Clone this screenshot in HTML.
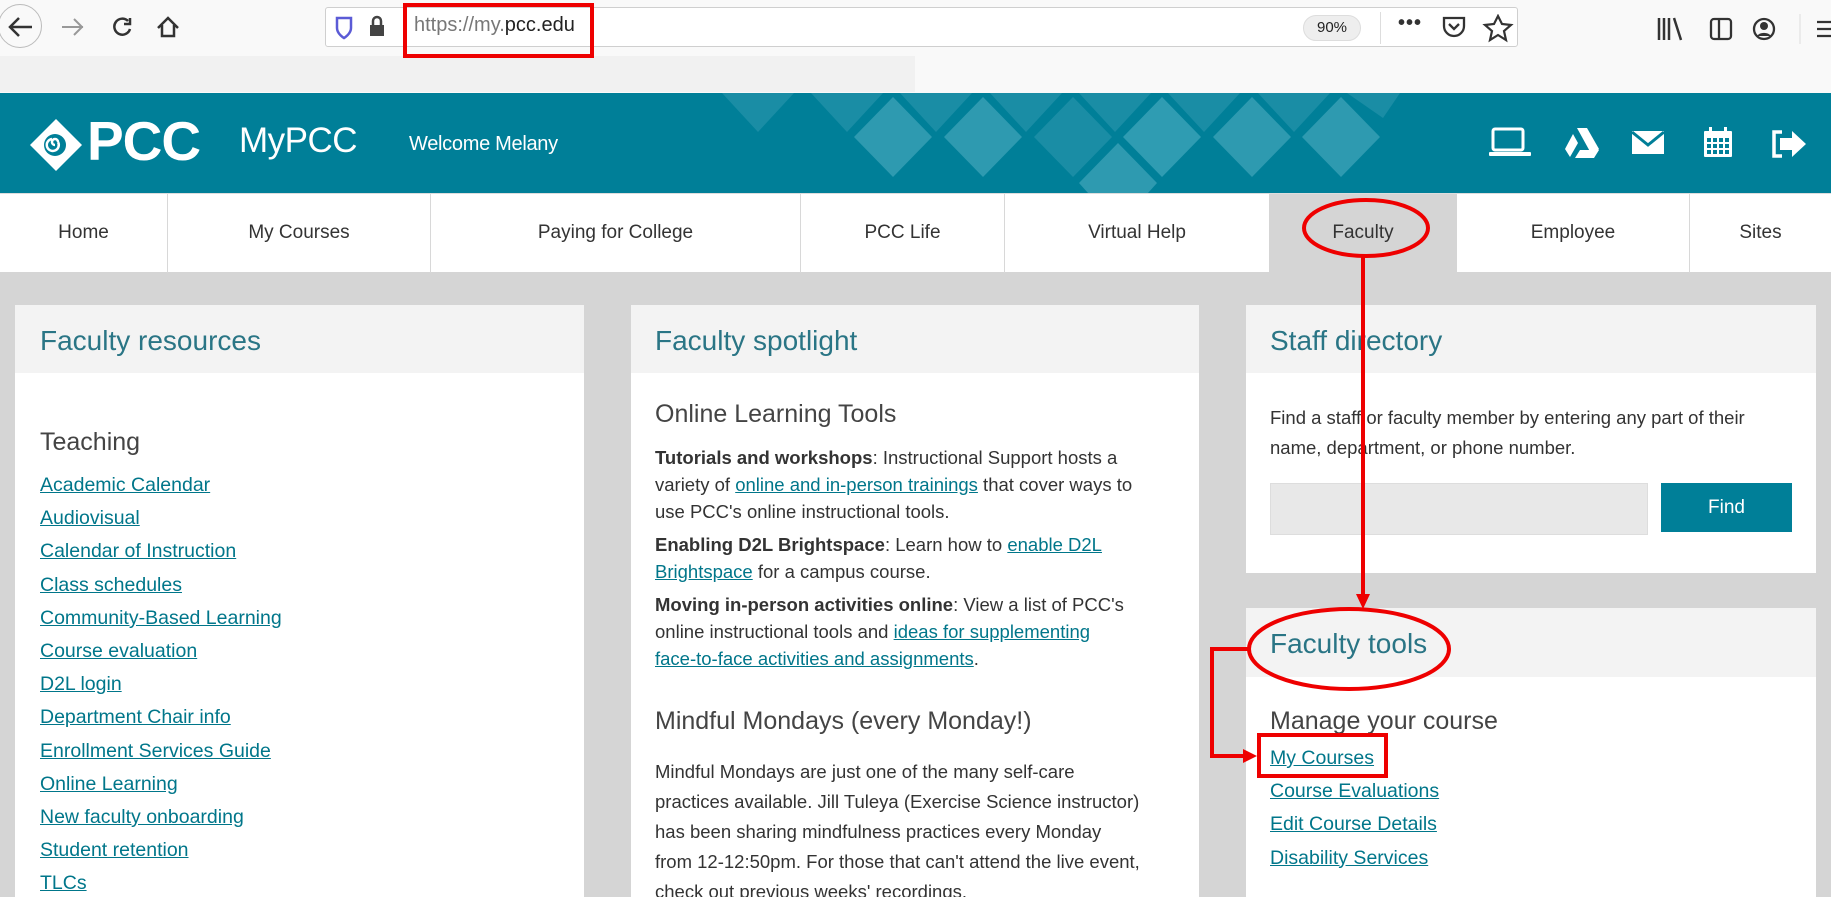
<!DOCTYPE html>
<html><head><meta charset="utf-8"><style>
*{margin:0;padding:0;box-sizing:border-box}
html{width:1831px;height:897px;overflow:hidden}
body{width:1831px;height:897px;overflow:hidden;position:relative;background:#d5d5d5;font-family:"Liberation Sans",sans-serif;color:#333}
#w{position:relative;width:1831px;height:897px;overflow:hidden}
.a{position:absolute}
.tb{left:0;top:0;width:1831px;height:93px;background:#f9f9f9}
.url{left:325px;top:7px;width:1193px;height:40px;background:#fff;border:1px solid #cfcfcf;border-radius:3px}
.hdr{left:0;top:93px;width:1831px;height:100px;background:#007f98;overflow:hidden}
.nav{left:0;top:193px;width:1831px;height:79px;background:#fff;border-top:1px solid #ddd}
.nav div{position:absolute;top:0;height:79px;line-height:78px;text-align:center;font-size:19px;color:#333;border-left:1px solid #d8d8d8}
.card{background:#fff}
.ch{position:absolute;left:0;top:0;right:0;height:68px;background:#f3f3f3}
.ct{position:absolute;left:24px;top:20px;font-size:28px;color:#2a7585;font-weight:300}
.lk{color:#00768a;text-decoration:underline;font-size:19.5px}
.links div{height:33.2px;line-height:33px}
p{font-size:18.5px;line-height:27px;white-space:nowrap}
h3{font-weight:normal;font-size:25px;color:#444}
.red{border:4px solid #e00;position:absolute}
</style></head><body><div id="w">
<div class="a tb"></div>
<div class="a" style="left:0;top:56px;width:915px;height:36px;background:#f1f1f1"></div>
<div class="a" style="left:-2px;top:4px;width:44px;height:44px;border:1px solid #bbb;border-radius:50%;background:#f9f9f9"></div>
<svg class="a" style="left:0;top:0" width="330" height="56">
<path d="M32 27H10M19 18l-9 9 9 9" stroke="#333" stroke-width="2.5" fill="none"/>
<path d="M83 27H62M74 19l8 8-8 8" stroke="#999" stroke-width="2" fill="none"/>
<path d="M128 21a8 8 0 1 0 2 8M130 18v6h-6" stroke="#333" stroke-width="2.5" fill="none"/>
<path d="M158 28l10-10 10 10M162 25v11h12V25" stroke="#333" stroke-width="2.5" fill="none"/>
</svg>
<div class="a url"></div>
<svg class="a" style="left:330px;top:14px" width="70" height="28"><path d="M7 4h14v10c0 6-7 10-7 10S7 20 7 14z" fill="none" stroke="#5b5bd6" stroke-width="2.5"/><rect x="40" y="11" width="14" height="11" fill="#444"/><path d="M43 11V7a4 4 0 0 1 8 0v4" stroke="#444" stroke-width="2.5" fill="none"/></svg>
<div class="a" style="left:414px;top:14px;font-size:20px;color:#777">https://my.<span style="color:#222">pcc.edu</span></div>
<div class="a" style="left:1303px;top:15px;width:58px;height:26px;border-radius:13px;background:#eee;border:1px solid #ddd;font-size:15px;line-height:24px;text-align:center;color:#222">90%</div>
<div class="a" style="left:1380px;top:12px;width:1px;height:32px;background:#ddd"></div>
<div class="a" style="left:1398px;top:12px;font-size:20px;font-weight:bold;color:#333;letter-spacing:1px">•••</div>
<svg class="a" style="left:1440px;top:14px" width="90" height="30"><path d="M4 4h20v8a10 10 0 0 1-20 0z" fill="none" stroke="#333" stroke-width="2.3"/><path d="M9 10l5 5 5-5" fill="none" stroke="#333" stroke-width="2.3"/><path d="M58 2l4 8 9 1-7 6 2 9-8-5-8 5 2-9-7-6 9-1z" fill="none" stroke="#333" stroke-width="2.2"/></svg>
<svg class="a" style="left:1655px;top:14px" width="176" height="30"><path d="M4 4v22M9 4v22M14 4v22M19 4l7 22" stroke="#333" stroke-width="2.5"/><rect x="56" y="5" width="20" height="20" rx="3" fill="none" stroke="#333" stroke-width="2.3"/><path d="M64 5v20" stroke="#333" stroke-width="2.3"/><circle cx="109" cy="15" r="10" fill="none" stroke="#333" stroke-width="2.3"/><circle cx="109" cy="12" r="4" fill="#333"/><path d="M102 22a8 6 0 0 1 14 0" fill="#333"/><path d="M145 0v30" stroke="#ddd"/><path d="M162 8h14M162 15h14M162 22h14" stroke="#333" stroke-width="2.3"/></svg>
<div class="red" style="left:403px;top:3px;width:191px;height:55px"></div>

<div class="a hdr">
<svg class="a" style="left:0;top:0" width="1831" height="100">
<g fill="#1a8da5">
<polygon points="722,0 794,0 758,39"/><polygon points="811,0 883,0 847,39"/><polygon points="900,0 972,0 936,39"/><polygon points="990,0 1062,0 1026,39"/><polygon points="1079,0 1151,0 1115,39"/><polygon points="1168,0 1240,0 1204,39"/><polygon points="1258,0 1330,0 1294,39"/><polygon points="1347,0 1400,0 1383,25"/>
</g>
<g fill="#2e9ab0">
<polygon points="893,4 932,44 893,84 854,44"/><polygon points="983,4 1022,44 983,84 944,44"/><polygon points="1162,4 1201,44 1162,84 1123,44" fill="#2f9cb2"/><polygon points="1252,4 1291,44 1252,84 1213,44"/><polygon points="1341,4 1380,44 1341,84 1302,44"/><polygon points="1118,50 1157,90 1148,100 1088,100 1079,90"/>
<polygon points="1073,4 1112,44 1073,84 1034,44" fill="#1a8da5"/>
</g>
</svg>
<svg class="a" style="left:30px;top:26px" width="54" height="52"><polygon points="26,0 52,26 26,52 0,26" fill="#fff"/><circle cx="25" cy="26" r="11" fill="#007f98"/><path d="M25 26a3 3 0 1 1 3 -3M28 23a6 6 0 1 1-6-3" stroke="#fff" stroke-width="2.5" fill="none"/></svg>
<div class="a" style="left:87px;top:16px;font-size:55px;font-weight:bold;color:#fff;letter-spacing:-1px">PCC</div>
<div class="a" style="left:239px;top:28px;font-size:35px;color:#fff;letter-spacing:-0.5px">MyPCC</div>
<div class="a" style="left:409px;top:40px;font-size:20px;color:#fff;letter-spacing:-0.3px">Welcome Melany</div>
<svg class="a" style="left:1485px;top:34px" width="330" height="34" fill="#fff">
<rect x="8" y="2" width="30" height="21" rx="2" fill="none" stroke="#fff" stroke-width="3"/><rect x="4" y="25" width="42" height="4" rx="1"/>
<polygon points="92,1 102,1 114,22 108,30"/><polygon points="88,7 93,16 85,30 80,22"/><polygon points="95,23 114,23 109,31 90,31"/>
<path d="M147 4h32v23h-32z"/><path d="M147 5l16 13 16-13" stroke="#007f98" stroke-width="3" fill="none"/>
<rect x="219" y="4" width="28" height="26" rx="1"/><g fill="#007f98"><rect x="222" y="11" width="4" height="4"/><rect x="228" y="11" width="4" height="4"/><rect x="234" y="11" width="4" height="4"/><rect x="240" y="11" width="4" height="4"/><rect x="222" y="17" width="4" height="4"/><rect x="228" y="17" width="4" height="4"/><rect x="234" y="17" width="4" height="4"/><rect x="240" y="17" width="4" height="4"/><rect x="222" y="23" width="4" height="4"/><rect x="228" y="23" width="4" height="4"/><rect x="234" y="23" width="4" height="4"/><rect x="240" y="23" width="4" height="4"/></g><rect x="224" y="0" width="3" height="7"/><rect x="239" y="0" width="3" height="7"/>
<path d="M297 5h-8v24h8" fill="none" stroke="#fff" stroke-width="3.5"/><polygon points="295,11 307,11 307,4 321,17 307,30 307,23 295,23"/>
</svg>
</div>

<div class="a nav">
<div style="left:0;width:167px;border-left:none">Home</div>
<div style="left:167px;width:263px">My Courses</div>
<div style="left:430px;width:370px">Paying for College</div>
<div style="left:800px;width:204px">PCC Life</div>
<div style="left:1004px;width:265px">Virtual Help</div>
<div style="left:1269px;width:188px;background:#d5d5d5;border-left:none">Faculty</div>
<div style="left:1457px;width:232px;border-left:none">Employee</div>
<div style="left:1689px;width:142px">Sites</div>
</div>

<div class="a card" style="left:15px;top:305px;width:569px;height:592px">
<div class="ch"></div><div class="ct" style="left:25px">Faculty resources</div>
<h3 class="a" style="left:25px;top:123px">Teaching</h3>
<div class="a links" style="left:25px;top:164px">
<div><span class="lk">Academic Calendar</span></div><div><span class="lk">Audiovisual</span></div><div><span class="lk">Calendar of Instruction</span></div><div><span class="lk">Class schedules</span></div><div><span class="lk">Community-Based Learning</span></div><div><span class="lk">Course evaluation</span></div><div><span class="lk">D2L login</span></div><div><span class="lk">Department Chair info</span></div><div><span class="lk">Enrollment Services Guide</span></div><div><span class="lk">Online Learning</span></div><div><span class="lk">New faculty onboarding</span></div><div><span class="lk">Student retention</span></div><div><span class="lk">TLCs</span></div>
</div>
</div>

<div class="a card" style="left:631px;top:305px;width:568px;height:592px">
<div class="ch"></div><div class="ct">Faculty spotlight</div>
<h3 class="a" style="left:24px;top:95px">Online Learning Tools</h3>
<div class="a" style="left:24px;top:139px">
<p><b>Tutorials and workshops</b>: Instructional Support hosts a<br>variety of <span class="lk" style="font-size:18.5px">online and in-person trainings</span> that cover ways to<br>use PCC's online instructional tools.</p>
<p style="margin-top:6px"><b>Enabling D2L Brightspace</b>: Learn how to <span class="lk" style="font-size:18.5px">enable D2L</span><br><span class="lk" style="font-size:18.5px">Brightspace</span> for a campus course.</p>
<p style="margin-top:6px"><b>Moving in-person activities online</b>: View a list of PCC's<br>online instructional tools and <span class="lk" style="font-size:18.5px">ideas for supplementing</span><br><span class="lk" style="font-size:18.5px">face-to-face activities and assignments</span>.</p>
</div>
<h3 class="a" style="left:24px;top:402px">Mindful Mondays (every Monday!)</h3>
<p class="a" style="left:24px;top:452px;line-height:30px">Mindful Mondays are just one of the many self-care<br>practices available. Jill Tuleya (Exercise Science instructor)<br>has been sharing mindfulness practices every Monday<br>from 12-12:50pm. For those that can't attend the live event,<br>check out previous weeks' recordings.</p>
</div>

<div class="a card" style="left:1246px;top:305px;width:570px;height:268px">
<div class="ch"></div><div class="ct">Staff directory</div>
<p class="a" style="left:24px;top:98px;line-height:30px">Find a staff or faculty member by entering any part of their<br>name, department, or phone number.</p>
<div class="a" style="left:24px;top:178px;width:378px;height:52px;background:#e8e8e8;border:1px solid #ddd"></div>
<div class="a" style="left:415px;top:178px;width:131px;height:49px;background:#007f98;color:#fff;font-size:19px;text-align:center;line-height:49px">Find</div>
</div>
<div class="a card" style="left:1246px;top:608px;width:570px;height:289px">
<div class="ch" style="height:69px"></div><div class="ct">Faculty tools</div>
<h3 class="a" style="left:24px;top:99px">Manage your course</h3>
<div class="a links" style="left:24px;top:134px">
<div><span class="lk">My Courses</span></div><div><span class="lk">Course Evaluations</span></div><div><span class="lk">Edit Course Details</span></div><div><span class="lk">Disability Services</span></div>
</div>
</div>

<svg class="a" style="left:0;top:0" width="1831" height="897">
<ellipse cx="1366" cy="228" rx="62" ry="28" fill="none" stroke="#e00" stroke-width="4"/>
<path d="M1363 256V596" stroke="#e00" stroke-width="4"/><polygon points="1356,594 1370,594 1363,609" fill="#e00"/>
<ellipse cx="1349" cy="649" rx="100" ry="40" fill="none" stroke="#e00" stroke-width="4"/>
<path d="M1250 649H1212V756H1245" stroke="#e00" stroke-width="4" fill="none"/><polygon points="1243,749 1257,756 1243,763" fill="#e00"/>
<rect x="1259" y="735" width="127" height="41" fill="none" stroke="#e00" stroke-width="4"/>
</svg>
</div></body></html>
